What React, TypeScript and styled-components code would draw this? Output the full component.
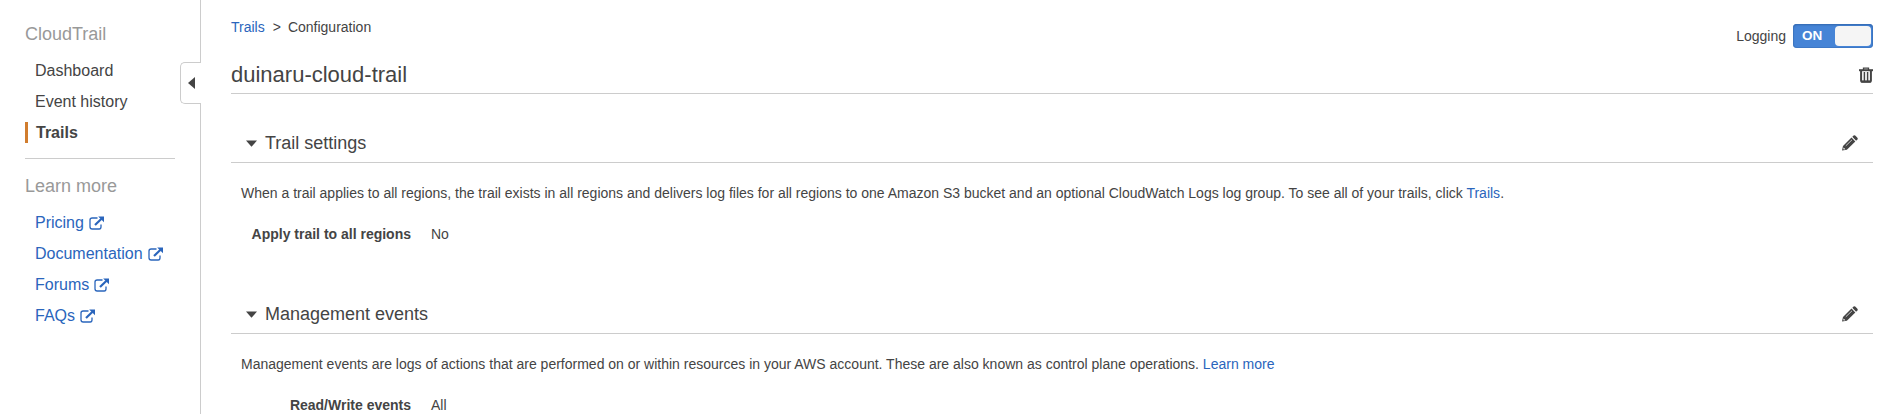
import React from "react";
import styled, { createGlobalStyle, css } from "styled-components";

const Global = createGlobalStyle`
  * { box-sizing: border-box; }
  body { margin: 0; background: #fff; color: #444; overflow: hidden;
    font: 14px/20px "Liberation Sans", Arial, Helvetica, sans-serif; }
`;
const Link = styled.a`
  color: #2a65bc;
  text-decoration: none;
  cursor: pointer;
`;
const Page = styled.div`
  display: flex;
  height: 414px;
  overflow: hidden;
`;
const Sidebar = styled.nav`
  position: relative;
  flex: 0 0 201px;
  padding: 22px 25px 0 25px;
  border-right: 1px solid #ccc;
`;
const SideTitle = styled.h2`
  margin: 0;
  font-size: 18px;
  font-weight: 400;
  line-height: 24px;
  color: #999;
`;
const SideList = styled.ul`
  list-style: none;
  margin: 0;
  padding: 14px 0 0;
`;
const SideItem = styled.li<{ $active?: boolean }>`
  display: flex;
  align-items: center;
  height: 21px;
  margin-bottom: 10px;
  padding-left: 10px;
  font-size: 16px;
  white-space: nowrap;
  ${(p) => p.$active && css`
    border-left: 3px solid #d17d2e;
    padding-left: 8px;
    font-weight: 700;
  `}
  svg { margin: 1px 0 0 5px; color: #2a65bc; }
`;
const SideRule = styled.hr`
  border: 0;
  height: 1px;
  margin: 15px 0 15px;
  background: #ccc;
`;
const CollapseTab = styled.button`
  position: absolute;
  top: 62px;
  right: -1px;
  width: 21px;
  height: 42px;
  padding: 0 6px 0 0;
  display: flex;
  align-items: center;
  justify-content: flex-end;
  background: #fff;
  border: 1px solid #ccc;
  border-right: 0;
  border-radius: 5px 0 0 5px;
`;
const Main = styled.main`
  flex: 1;
  padding: 17px 22px 0 30px;
`;
const TopRow = styled.div`
  display: flex;
  justify-content: space-between;
  height: 38px;
`;
const Crumbs = styled.div`
  display: flex;
  gap: 8px;
  span:last-child { margin-left: -1px; }
`;
const Logging = styled.div`
  display: flex;
  align-items: center;
  gap: 7px;
  height: 24px;
  margin-top: 7px;
`;
const LoggingLabel = styled.span`
  padding-bottom: 1px;
`;
const Switch = styled.div`
  display: flex;
  align-items: center;
  justify-content: space-between;
  width: 80px;
  height: 24px;
  padding: 0 2px 0 9px;
  border-radius: 4px;
  background: #4684d6;
  box-shadow: inset 0 0 0 1px #3b72bd99, inset 0 1px 2px #2f62a8;
  color: #fff;
  font-size: 13.5px;
  font-weight: 700;
  line-height: 22px;
`;
const SwitchText = styled.span`
  padding-bottom: 1px;
`;
const Knob = styled.span`
  width: 36px;
  height: 20px;
  border-radius: 4px;
  background: #f5f5f5;
`;
const TitleRow = styled.header`
  display: flex;
  align-items: center;
  justify-content: space-between;
  height: 39px;
  padding-top: 1px;
  border-bottom: 1px solid #ccc;
`;
const Title = styled.h1`
  margin: 0;
  font-size: 22px;
  font-weight: 400;
  line-height: 28px;
`;
const Section = styled.section`
  height: 171px;
  padding-top: 30px;
`;
const SectionHead = styled.div`
  display: flex;
  align-items: center;
  height: 39px;
  padding: 0 15px 0 15px;
  border-bottom: 1px solid #ccc;
`;
const SectionTitle = styled.h3`
  flex: 1;
  margin: 0 0 0 8px;
  font-size: 18px;
  font-weight: 400;
  line-height: 24px;
`;
const Description = styled.p`
  margin: 20px 0 0 10px;
  white-space: nowrap;
`;
const Field = styled.div`
  display: flex;
  gap: 20px;
  margin-top: 21px;
  padding-left: 10px;
`;
const FieldLabel = styled.span`
  width: 170px;
  text-align: right;
  font-weight: 700;
`;

const ExternalIcon = () => (
  <svg width="16" height="14" viewBox="0 0 16 14" fill="none" stroke="currentColor">
    <path d="M8.5 2H3.2Q1 2 1 4v6.8Q1 13 3.2 13h7Q12 13 12 10.8V8.5" strokeWidth="1.3" />
    <path d="M6 9l6.5-6.2" strokeWidth="2.2" />
    <path d="M9.2.6H15V6.2z" fill="currentColor" stroke="none" />
  </svg>
);
const TrashIcon = () => (
  <svg width="14" height="16" viewBox="0 0 14 16" fill="none" stroke="#444">
    <path d="M4.5 3V1.2h5V3" strokeWidth="1.3" />
    <path d="M0 3.2h14" strokeWidth="2" />
    <path d="M2.1 4v9.8q0 1 1 1h7.8q1 0 1-1V4" strokeWidth="2" />
    <path d="M5.4 5v9M8.6 5v9" strokeWidth="1.5" />
    <path d="M2 14.5h10" strokeWidth="2" />
  </svg>
);
const PencilIcon = () => (
  <svg width="16" height="16" viewBox="0 0 16 16" fill="#444">
    <path d="M0 15.6l1-4.7L9.5 2.6l3.8 3.8-8.4 8.3z" />
    <path d="M10.3 1.8l1.3-1.2q.8-.7 1.6 0l2.2 2.2q.7.8 0 1.6l-1.3 1.3z" />
    <path d="M3.8 10.8l6.2-6" stroke="#fff" strokeWidth=".7" />
    <path d="M1.6 12.4l1.8 1.8-1.6.4-.5-.6z" fill="#fff" />
  </svg>
);
const CaretDown = () => (
  <svg width="11" height="7" viewBox="0 0 11 7"><path d="M0 .5h11L5.5 6.8z" fill="#444" /></svg>
);
const CaretLeft = () => (
  <svg width="7" height="12" viewBox="0 0 7 12"><path d="M7 0v12L0 6z" fill="#444" /></svg>
);

const pages = ["Dashboard", "Event history", "Trails"];
const resources = ["Pricing", "Documentation", "Forums", "FAQs"];

type SettingsProps = { title: string; label: string; value: string; children: React.ReactNode };
const Settings = ({ title, label, value, children }: SettingsProps) => (
  <Section>
    <SectionHead>
      <CaretDown />
      <SectionTitle>{title}</SectionTitle>
      <PencilIcon />
    </SectionHead>
    <Description>{children}</Description>
    <Field>
      <FieldLabel>{label}</FieldLabel>
      <span>{value}</span>
    </Field>
  </Section>
);

export default function App() {
  return (
    <Page>
      <Global />
      <Sidebar>
        <SideTitle>CloudTrail</SideTitle>
        <SideList>
          {pages.map((p) => <SideItem key={p} $active={p === "Trails"}>{p}</SideItem>)}
        </SideList>
        <SideRule />
        <SideTitle>Learn more</SideTitle>
        <SideList>
          {resources.map((r) => (
            <SideItem key={r}><Link>{r}</Link><ExternalIcon /></SideItem>
          ))}
        </SideList>
        <CollapseTab aria-label="Collapse navigation"><CaretLeft /></CollapseTab>
      </Sidebar>
      <Main>
        <TopRow>
          <Crumbs><Link>Trails</Link><span>&gt;</span><span>Configuration</span></Crumbs>
          <Logging>
            <LoggingLabel>Logging</LoggingLabel>
            <Switch><SwitchText>ON</SwitchText><Knob /></Switch>
          </Logging>
        </TopRow>
        <TitleRow><Title>duinaru-cloud-trail</Title><TrashIcon /></TitleRow>
        <Settings title="Trail settings" label="Apply trail to all regions" value="No">
          When a trail applies to all regions, the trail exists in all regions and delivers log files for all regions to one Amazon S3 bucket and an optional CloudWatch Logs log group. To see all of your trails, click <Link>Trails</Link>.
        </Settings>
        <Settings title="Management events" label="Read/Write events" value="All">
          Management events are logs of actions that are performed on or within resources in your AWS account. These are also known as control plane operations. <Link>Learn more</Link>
        </Settings>
      </Main>
    </Page>
  );
}
